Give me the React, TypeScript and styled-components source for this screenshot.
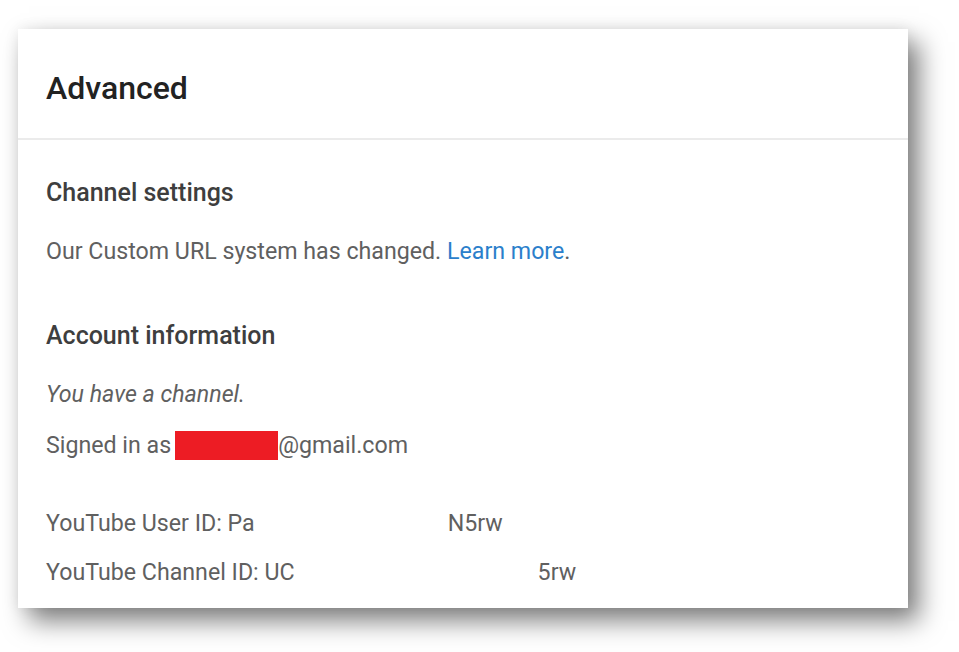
import styled, { createGlobalStyle } from 'styled-components';

const GlobalStyle = createGlobalStyle`
  html, body {
    margin: 0;
    padding: 0;
    background: #ffffff;
  }
  body {
    font-family: Roboto, 'Liberation Sans', Arial, sans-serif;
  }
`;

const Page = styled.div`
  width: 959px;
  height: 652px;
  padding: 29px 0 0 18px;
  box-sizing: border-box;
  overflow: hidden;
`;

const Card = styled.section`
  width: 890px;
  height: 579px;
  background: #ffffff;
  box-shadow: 11px 13px 24px rgba(0, 0, 0, 0.5), 0 0 14px rgba(0, 0, 0, 0.07);
  display: flex;
  flex-direction: column;
  overflow: hidden;
`;

const Header = styled.header`
  height: 111px;
  display: flex;
  align-items: center;
  padding: 0 28px;
  border-bottom: 2px solid #ebebeb;
  box-sizing: border-box;
`;

const Title = styled.h1`
  margin: 0;
  font-size: 32px;
  font-weight: 500;
  color: #222222;
  padding-top: 8px;
`;

const Body = styled.div`
  padding: 40px 28px 0;
  display: flex;
  flex-direction: column;
`;

const SectionTitle = styled.h2<{ $gap?: number }>`
  margin: 0 0 ${(p) => p.$gap ?? 32}px;
  font-size: 25px;
  font-weight: 500;
  color: #3e3e3e;
  line-height: 26px;
`;

const Line = styled.p<{ $gap?: number; $italic?: boolean }>`
  margin: 0 0 ${(p) => p.$gap ?? 24}px;
  font-size: 23.2px;
  line-height: 26px;
  color: #606060;
  font-style: ${(p) => (p.$italic ? 'italic' : 'normal')};
  white-space: nowrap;
`;

const Link = styled.a`
  color: #2b7fcb;
  text-decoration: none;
`;

const Redacted = styled.span`
  display: inline-block;
  width: 103px;
  height: 29px;
  background: #ed1c24;
  vertical-align: -7px;
  margin-left: 4px;
`;

const Hidden = styled.span<{ $width: number }>`
  display: inline-block;
  width: ${(p) => p.$width}px;
`;

export default function App() {
  return (
    <Page>
      <GlobalStyle />
      <Card>
        <Header>
          <Title>Advanced</Title>
        </Header>
        <Body>
          <SectionTitle>Channel settings</SectionTitle>
          <Line $gap={59}>
            Our Custom URL system has changed. <Link href="#">Learn more</Link>.
          </Line>
          <SectionTitle $gap={32}>Account information</SectionTitle>
          <Line $italic $gap={24}>You have a channel.</Line>
          <Line $gap={50}>
            Signed in as<Redacted />@gmail.com
          </Line>
          <Line $gap={23}>
            YouTube User ID: Pa<Hidden $width={193} />N5rw
          </Line>
          <Line $gap={0}>
            YouTube Channel ID: UC<Hidden $width={243} />5rw
          </Line>
        </Body>
      </Card>
    </Page>
  );
}
